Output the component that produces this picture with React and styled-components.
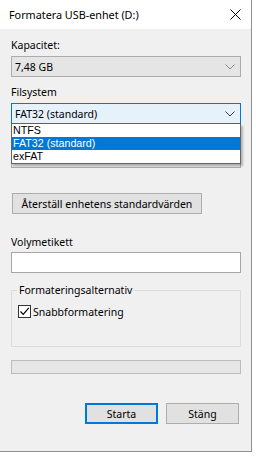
import React from "react";
import styled, { createGlobalStyle } from "styled-components";

const Global = createGlobalStyle`
  html, body { margin: 0; padding: 0; background: #ffffff; }
  body { font-family: "Noto Sans", "Open Sans", sans-serif; font-size: 10.5px; color: #000; }
  * { box-sizing: border-box; }
`;

const Window = styled.div`
  width: 252px;
  height: 452px;
  background: #f0f0f0;
  border-right: 1px solid #8f8f8f;
  border-bottom: 1px solid #8f8f8f;
  display: flex;
  flex-direction: column;
`;

const TitleBar = styled.div`
  height: 29px;
  background: #ffffff;
  display: flex;
  align-items: center;
  justify-content: space-between;
  padding: 0 10px 1px 9px;
  font-size: 10.8px;
  flex-shrink: 0;
`;

const Body = styled.div`
  display: flex;
  flex-direction: column;
  padding: 0 10px 0 11px;
`;

const Label = styled.div`
  height: 15px;
  line-height: 15px;
  margin-top: ${(p) => p.$mt}px;
  white-space: nowrap;
`;

const ComboWrap = styled.div`
  position: relative;
  margin-top: ${(p) => p.$mt}px;
`;

const Combo = styled.div`
  height: 21px;
  display: flex;
  align-items: center;
  justify-content: space-between;
  padding: 0 5px 0 3px;
  background: ${(p) => (p.$focus ? "#e5f1fb" : "#e5e5e5")};
  border: 1px solid ${(p) => (p.$focus ? "#0078d7" : "#acacac")};
  white-space: nowrap;
`;

const DropList = styled.div`
  position: absolute;
  left: 0;
  right: 0;
  top: 100%;
  background: #ffffff;
  border: 1px solid #646464;
  border-top: none;
  box-shadow: 2px 2px 2px rgba(0, 0, 0, 0.25);
  z-index: 2;
  font-family: "Liberation Sans", Arial, sans-serif;
  font-size: 10.7px;
`;

const Item = styled.div`
  height: 13px;
  line-height: 13px;
  padding-left: 1px;
  background: ${(p) => (p.$sel ? "#0078d7" : "transparent")};
  color: ${(p) => (p.$sel ? "#ffffff" : "#000000")};
`;

const Button = styled.button`
  font: inherit;
  color: #000;
  height: 21px;
  width: ${(p) => p.$w}px;
  margin: 0;
  margin-top: ${(p) => p.$mt || 0}px;
  margin-left: ${(p) => p.$ml || 0}px;
  padding: 0;
  background: #e1e1e1;
  border: ${(p) => (p.$default ? "2px solid #0078d7" : "1px solid #adadad")};
  display: flex;
  align-items: center;
  justify-content: center;
  white-space: nowrap;
`;

const TextBox = styled.div`
  height: 21px;
  margin-top: 2px;
  background: #ffffff;
  border: 1px solid #a6a6a6;
`;

const Group = styled.fieldset`
  margin: 10px 0 0 0;
  padding: 8px 6px 28px 6px;
  border: 1px solid #dcdcdc;
  min-width: 0;
`;

const Legend = styled.legend`
  margin-left: -1px;
  padding: 0 2px;
  height: 14px;
  line-height: 14px;
`;

const CheckRow = styled.div`
  display: flex;
  align-items: center;
  gap: 2px;
  height: 13px;
`;

const CheckBox = styled.div`
  width: 13px;
  height: 13px;
  background: #ffffff;
  border: 1px solid #333333;
  display: flex;
  align-items: center;
  justify-content: center;
`;

const Progress = styled.div`
  height: 14px;
  margin-top: 13px;
  background: #e6e6e6;
  border: 1px solid #bcbcbc;
`;

const ButtonRow = styled.div`
  display: flex;
  justify-content: flex-end;
  gap: 8px;
  margin-top: 29px;
  padding-right: 2px;
`;

const Chevron = ({ color }) => (
  <svg width="10" height="6" viewBox="0 0 10 6">
    <polyline points="0.5,0.5 5,5 9.5,0.5" fill="none" stroke={color} strokeWidth="1" />
  </svg>
);

export default function App() {
  return (
    <>
      <Global />
      <Window>
        <TitleBar>
          <span>Formatera USB-enhet (D:)</span>
          <svg width="11" height="11" viewBox="0 0 11 11">
            <path d="M0.5 0.5 L10.5 10.5 M10.5 0.5 L0.5 10.5" stroke="#000" strokeWidth="1" />
          </svg>
        </TitleBar>
        <Body>
          <Label $mt={9}>Kapacitet:</Label>
          <ComboWrap $mt={3}>
            <Combo>
              <span>7,48 GB</span>
              <Chevron color="#8a8a8a" />
            </Combo>
          </ComboWrap>
          <Label $mt={8}>Filsystem</Label>
          <ComboWrap $mt={3}>
            <Combo $focus>
              <span>FAT32 (standard)</span>
              <Chevron color="#404040" />
            </Combo>
            <DropList>
              <Item>NTFS</Item>
              <Item $sel>FAT32 (standard)</Item>
              <Item>exFAT</Item>
            </DropList>
          </ComboWrap>
          <Label $mt={6} />
          <ComboWrap $mt={2}>
            <Combo>
              <span />
              <Chevron color="#8a8a8a" />
            </Combo>
          </ComboWrap>
          <Button $w={190} $mt={25} $ml={1}>Återställ enhetens standardvärden</Button>
          <Label $mt={21}>Volymetikett</Label>
          <TextBox />
          <Group>
            <Legend>Formateringsalternativ</Legend>
            <CheckRow>
              <CheckBox>
                <svg width="11" height="11" viewBox="0 0 11 11">
                  <path d="M1.5 5.5 L4.2 8.3 L9.8 1.8" fill="none" stroke="#000" strokeWidth="1.2" />
                </svg>
              </CheckBox>
              <span>Snabbformatering</span>
            </CheckRow>
          </Group>
          <Progress />
          <ButtonRow>
            <Button $default $w={73}>Starta</Button>
            <Button $w={73}>Stäng</Button>
          </ButtonRow>
        </Body>
      </Window>
    </>
  );
}
